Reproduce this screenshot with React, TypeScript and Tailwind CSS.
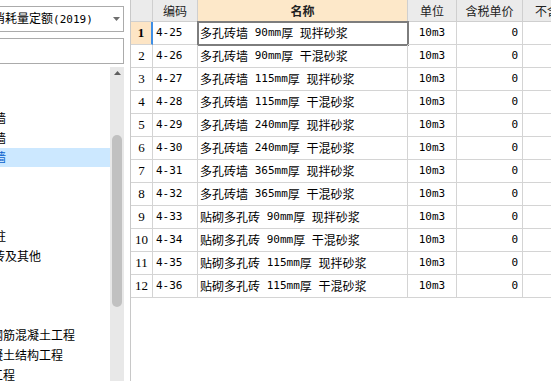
import React from "react";

const rows: [string, string][] = [
  ["4-25", "多孔砖墙 90mm厚 现拌砂浆"],
  ["4-26", "多孔砖墙 90mm厚 干混砂浆"],
  ["4-27", "多孔砖墙 115mm厚 现拌砂浆"],
  ["4-28", "多孔砖墙 115mm厚 干混砂浆"],
  ["4-29", "多孔砖墙 240mm厚 现拌砂浆"],
  ["4-30", "多孔砖墙 240mm厚 干混砂浆"],
  ["4-31", "多孔砖墙 365mm厚 现拌砂浆"],
  ["4-32", "多孔砖墙 365mm厚 干混砂浆"],
  ["4-33", "贴砌多孔砖 90mm厚 现拌砂浆"],
  ["4-34", "贴砌多孔砖 90mm厚 干混砂浆"],
  ["4-35", "贴砌多孔砖 115mm厚 现拌砂浆"],
  ["4-36", "贴砌多孔砖 115mm厚 干混砂浆"],
];

// tree is scrolled sideways, only the tail of each label shows
const tree: { text: string; shift: string; selected?: boolean }[] = [
  { text: "", shift: "" },
  { text: "", shift: "" },
  { text: "墙", shift: "-ml-[6px]" },
  { text: "墙", shift: "-ml-[6px]" },
  { text: "墙", shift: "-ml-[6px]", selected: true },
  { text: "", shift: "" },
  { text: "", shift: "" },
  { text: "", shift: "" },
  { text: "柱", shift: "-ml-[6px]" },
  { text: "砖及其他", shift: "-ml-[7px]" },
  { text: "", shift: "" },
  { text: "", shift: "" },
  { text: "", shift: "" },
  { text: "钢筋混凝土工程", shift: "-ml-[9px]" },
  { text: "凝土结构工程", shift: "-ml-[9px]" },
  { text: "工程", shift: "-ml-[9px]" },
];

function Mixed({ text }: { text: string }) {
  const parts = text.split(/([\x20-\x7e]+)/).filter((p) => p !== "");
  return (
    <>
      {parts.map((p, i) =>
        /^[\x20-\x7e]+$/.test(p) ? (
          <span key={i} className="font-['DejaVu_Sans_Mono',monospace] text-[11px] whitespace-pre">
            {p}
          </span>
        ) : (
          <span key={i}>{p}</span>
        )
      )}
    </>
  );
}

const Sidebar = () => (
  <div className="flex w-[130px] shrink-0 flex-col overflow-hidden pr-[6px] pt-[6px]">
    <div className="-ml-[10px] flex h-[26px] items-center border border-[#ababab] pl-[2px] pr-[3px]">
      <span className="flex-1 whitespace-nowrap">
        消耗量定额<Mixed text="(2019)" />
      </span>
      <svg width="7" height="4" viewBox="0 0 7 4">
        <path d="M0 0h7L3.5 4z" fill="#6e6e6e" />
      </svg>
    </div>
    <div className="-ml-[10px] mt-[6px] h-[26px] border border-[#ababab]" />
    <div className="mt-[3px] flex min-h-0 flex-1">
      <div className="min-w-0 flex-1 overflow-hidden pt-[1.6px]">
        {tree.map((t, i) => (
          <div
            key={i}
            className={`flex h-[19.75px] items-center whitespace-nowrap ${
              t.selected ? "bg-[#cce8ff] text-[#0a62cc]" : ""
            }`}
          >
            <span className={t.shift}>{t.text}</span>
          </div>
        ))}
      </div>
      <div className="flex w-[14px] flex-col items-center bg-[#e8e8e8] pt-[4px]">
        <svg width="7" height="4" viewBox="0 0 7 4">
          <path d="M3.5 0L7 4H0z" fill="#5f5f5f" />
        </svg>
        <div className="mt-[60px] h-[172px] w-[10px] rounded-full bg-[#c1c1c1]" />
      </div>
    </div>
  </div>
);

const head = "flex h-[22px] items-center justify-center border-b border-r border-[#cfcfcf] bg-[#ebebeb] text-[#222]";
const cell = "flex h-[23px] items-center border-b border-r border-[#d4d4d4] whitespace-nowrap";

const Grid = () => (
  <div className="min-w-0 flex-1 overflow-hidden border-l border-[#c8c8c8]">
    <div className="grid w-max grid-cols-[22px_45px_210px_49px_66px_86px]">
      <div className={head} />
      <div className={head}>编码</div>
      <div className={`${head} bg-[#fde8c9] font-bold`}>名称</div>
      <div className={head}>单位</div>
      <div className={head}>含税单价</div>
      <div className={`${head} justify-start pl-[12px] overflow-hidden whitespace-nowrap`}>不含税单价</div>

      {rows.map(([code, name], i) => (
        <React.Fragment key={code}>
          <div
            className={`${cell} justify-center font-['Liberation_Serif',serif] text-[13px] ${
              i === 0 ? "border-r-2 border-r-[#3f8fe6] bg-[#fde5c5] font-bold" : ""
            }`}
          >
            {i + 1}
          </div>
          <div className={`${cell} pl-[3px]`}>
            <Mixed text={code} />
          </div>
          <div
            className={`${cell} pl-[2px] ${
              i === 0 ? "outline-2 -outline-offset-1 outline-[#7d7d7d]" : ""
            }`}
          >
            <Mixed text={name} />
          </div>
          <div className={`${cell} justify-center`}>
            <Mixed text="10m3" />
          </div>
          <div className={`${cell} justify-end pr-[4px]`}>
            <Mixed text="0" />
          </div>
          <div className={cell} />
        </React.Fragment>
      ))}
    </div>
  </div>
);

export default function App() {
  return (
    <div className="flex h-[381px] w-[551px] overflow-hidden bg-white font-['Noto_Sans_CJK_SC',sans-serif] text-[12px] text-black">
      <Sidebar />
      <Grid />
    </div>
  );
}
